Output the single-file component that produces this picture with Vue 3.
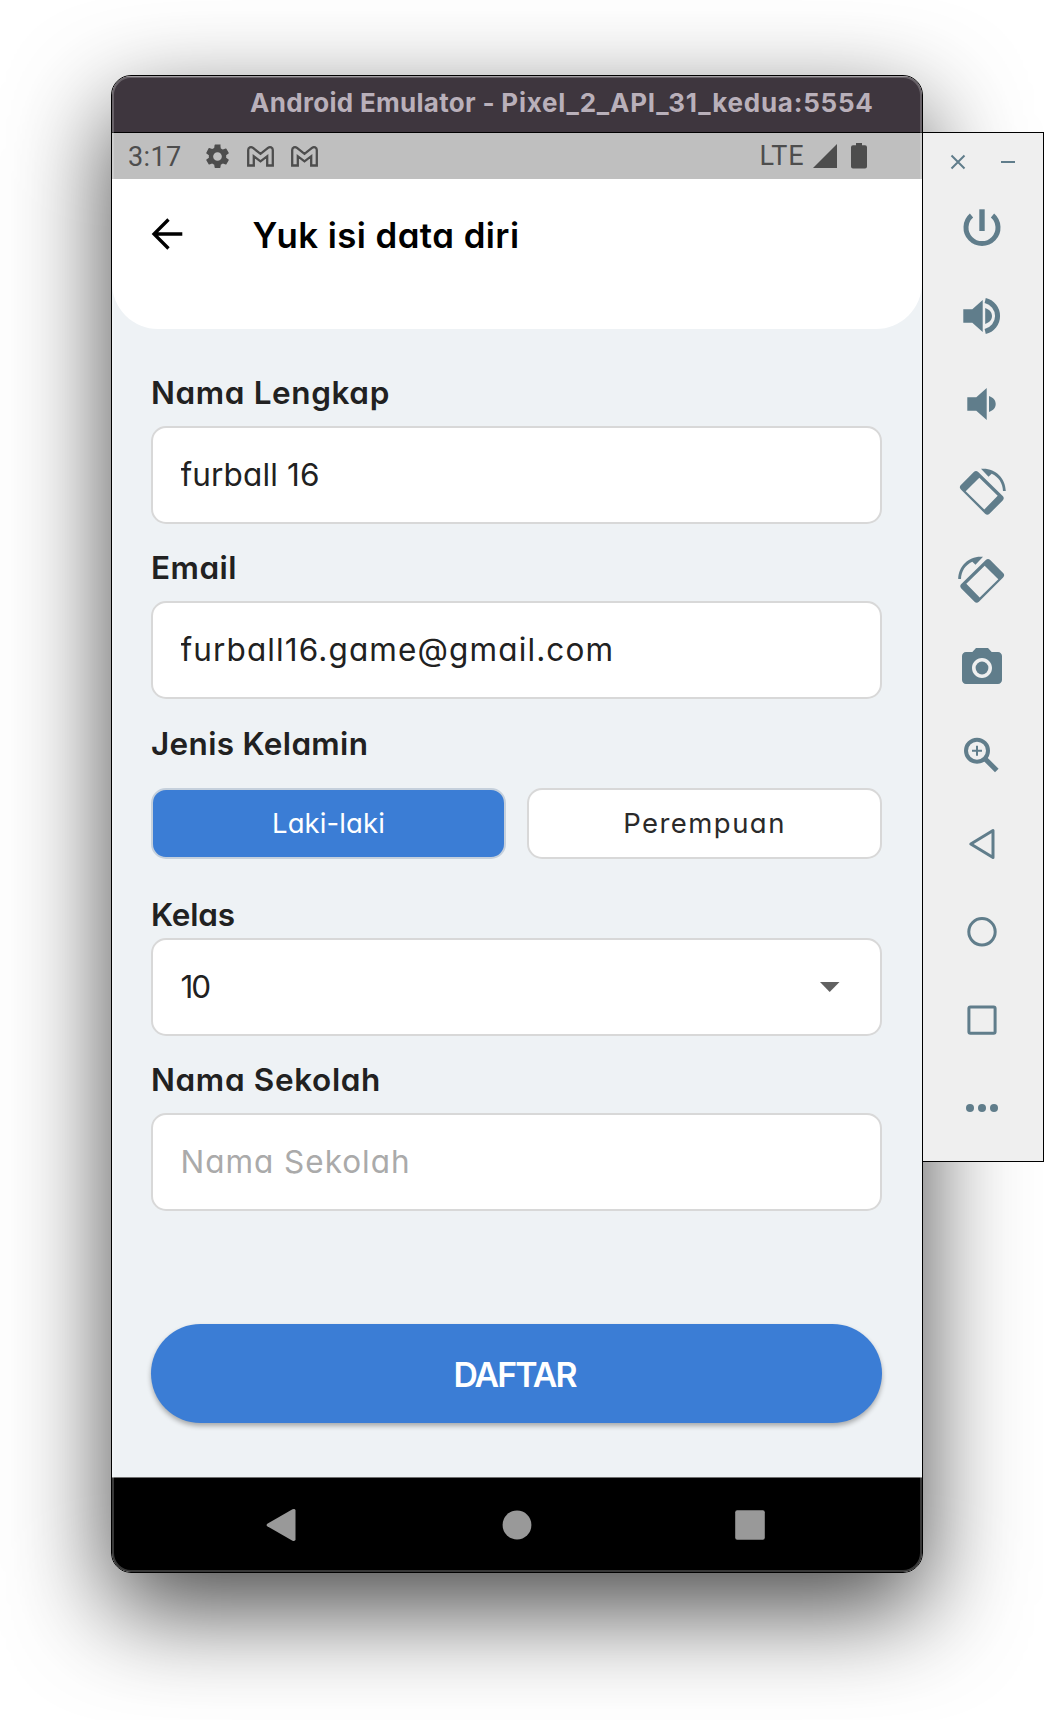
<script setup>
import { ref } from 'vue'

const fullName = ref('furball 16')
const email = ref('furball16.game@gmail.com')
const school = ref('')
const gender = ref('Laki-laki')
const rotatePhone = 'M15.8 4Q18 1.8 20.2 4L44.7 28.1Q46.8 30.3 44.7 32.5L31.5 45.7Q29.3 47.9 27.1 45.7L2.9 21.5Q.7 19.3 2.9 17.1ZM21.3 9.7L7.7 23.2 26.3 41.4 39.7 27.8Z'
const rotateArc = 'M23 .8L30.5 8.7 33.7 5.7C40.5 8.8 44.8 15 45 23H47.8C47.5 10.5 38 .8 25.5 .8Z'
</script>

<template>
  <main class="desktop">
    <section class="emulator">
      <header class="titlebar">Android Emulator - <span class="device">Pixel_2_API_31_kedua:5554</span></header>
      <div class="status">
        <span class="time">3:17</span>
        <svg class="gear" viewBox="0 0 24 24"><path d="M19.14 12.94c.04-.3.06-.61.06-.94s-.02-.64-.07-.94l2.03-1.58a.49.49 0 0 0 .12-.61l-1.92-3.32a.49.49 0 0 0-.59-.22l-2.39.96a7 7 0 0 0-1.62-.94l-.36-2.54A.48.48 0 0 0 13.92 2h-3.84a.48.48 0 0 0-.47.41l-.36 2.54a7.4 7.4 0 0 0-1.62.94l-2.39-.96a.48.48 0 0 0-.59.22L2.74 8.87a.48.48 0 0 0 .12.61l2.03 1.58a6 6 0 0 0 0 1.88l-2.03 1.58a.49.49 0 0 0-.12.61l1.92 3.32c.12.22.37.29.59.22l2.39-.96c.5.38 1.03.7 1.62.94l.36 2.54c.05.24.24.41.48.41h3.84c.24 0 .44-.17.47-.41l.36-2.54a7 7 0 0 0 1.62-.94l2.39.96c.22.08.47 0 .59-.22l1.92-3.32a.48.48 0 0 0-.12-.61ZM12 15.6a3.6 3.6 0 1 1 0-7.2 3.6 3.6 0 0 1 0 7.2Z" /></svg>
        <svg v-for="n in 2" :key="n" class="mail" viewBox="0 0 27 21"><path d="M1.2 19.5V4C1.2 1.4 4 .3 6 1.9L13.5 7.8 21 1.9C23 .3 25.8 1.4 25.8 4V19.5H20.2V10.2L13.5 15.3 6.8 10.2V19.5Z" /></svg>
        <span class="lte">LTE</span>
        <svg class="signal" viewBox="0 0 24 24"><path d="M0 24L24 0V24Z" /></svg>
        <svg class="battery" viewBox="0 0 16 26"><path d="M5 0h6v2.3h3q2 0 2 2V23.5q0 2-2 2H2q-2 0-2-2V4.300q0-2 2-2h3Z" /></svg>
      </div>
      <div class="screen">
        <div class="appbar">
          <svg class="back" viewBox="0 0 32 32"><path d="M31.300 16H3M17.500 1.500L3 16 17.500 30.500" /></svg>
          <h1>Yuk isi data diri</h1>
        </div>
        <form class="form" @submit.prevent>
          <label class="l1">Nama Lengkap</label>
          <input v-model="fullName" class="box v1">
          <label class="l2">Email</label>
          <input v-model="email" class="box v2">
          <label class="l3">Jenis Kelamin</label>
          <div class="choices">
            <button type="button" class="c1" :class="{ on: gender === 'Laki-laki' }" @click="gender = 'Laki-laki'">Laki-laki</button>
            <button type="button" class="c2" :class="{ on: gender === 'Perempuan' }" @click="gender = 'Perempuan'">Perempuan</button>
          </div>
          <label class="l4">Kelas</label>
          <div class="box select"><span>10</span><svg viewBox="0 0 20 10"><path d="M0 0H19.500L9.700 10Z" /></svg></div>
          <label class="l5">Nama Sekolah</label>
          <input v-model="school" class="box v3" placeholder="Nama Sekolah">
          <button class="submit">DAFTAR</button>
        </form>
      </div>
      <nav class="navbar">
        <svg viewBox="0 0 32 32"><path d="M3.300 14.700L28.500 .2Q31.500-.5 31.500 1.500V30.500Q31.500 32.500 28.500 31.800L3.300 17.300Q1.800 16 3.300 14.700Z" /></svg>
        <svg viewBox="0 0 32 32"><circle cx="16" cy="16" r="14.400" /></svg>
        <svg viewBox="0 0 32 32"><rect x="1.200" y="1.200" width="29.600" height="29.600" rx="2" /></svg>
      </nav>
    </section>

    <aside class="toolbar">
      <div class="window-actions">
        <svg viewBox="0 0 14 14"><path d="M.5 .5L13.500 13.500M13.500 .5L.5 13.500" /></svg>
        <svg viewBox="0 0 14 14"><path d="M0 7H14" /></svg>
      </div>
      <div class="tools">
        <svg viewBox="0 0 48 48"><path class="line w5" d="M13.500 11.500A16 16 0 1 0 34.500 11.500" /><path d="M21.300 5.300H26.700V27H21.300Z" /></svg>
        <svg viewBox="0 0 48 48"><path d="M5.300 17.300H14.300L24.700 8V40L14.300 30.700H5.300ZM27.200 16C31.700 17.500 34 20.500 34 24S31.700 30.500 27.200 32Z" /><path class="line w5" d="M27.200 8.500A15.900 15.900 0 0 1 27.200 39.500" /></svg>
        <svg viewBox="0 0 48 48"><path d="M9.300 17.300H18.300L28.700 8V40L18.300 30.700H9.300ZM31 16C35.500 17.500 37.700 20.500 37.700 24S35.500 30.500 31 32Z" /></svg>
        <svg viewBox="0 0 48 48"><path fill-rule="evenodd" :d="rotatePhone" /><path :d="rotateArc" /></svg>
        <svg viewBox="0 0 48 48"><g transform="translate(48 0) scale(-1 1)"><path fill-rule="evenodd" :d="rotatePhone" /><path :d="rotateArc" /></g></svg>
        <svg viewBox="0 0 24 24"><path d="M9 2L7.170 4H4c-1.100 0-2 .9-2 2v12c0 1.100.9 2 2 2h16c1.100 0 2-.9 2-2V6c0-1.100-.9-2-2-2h-3.170L15 2H9zm3 15c-2.760 0-5-2.240-5-5s2.240-5 5-5 5 2.240 5 5-2.240 5-5 5z" /><circle cx="12" cy="12" r="3.200" /></svg>
        <svg viewBox="0 0 48 48"><circle class="line w4" cx="19" cy="18.700" r="11" /><path class="line w5" d="M27.500 27.200L38.800 38.500" /><path class="line w2" d="M14 18.700H24M19 13.700V23.700" /></svg>
        <svg viewBox="0 0 48 48"><path class="line w3" d="M12.800 24L35 10.500V37.500Z" /></svg>
        <svg viewBox="0 0 48 48"><circle class="line w3" cx="24" cy="23.800" r="13.200" /></svg>
        <svg viewBox="0 0 48 48"><rect class="line w3" x="10.900" y="11" width="26.200" height="26.200" rx="1.500" /></svg>
        <svg viewBox="0 0 48 48"><circle cx="12" cy="24" r="4" /><circle cx="24" cy="24" r="4" /><circle cx="36" cy="24" r="4" /></svg>
      </div>
    </aside>
  </main>
</template>

<style>
body { margin: 0; background: #fff; }
</style>

<style scoped>
* { box-sizing: border-box; }
svg { display: block; flex: none; overflow: visible; }
.desktop {
  width: 1044px; height: 1720px; padding: 75px 0 0 111px; overflow: hidden;
  display: flex; align-items: flex-start; background: #fff;
  font-family: Inter, "Open Sans", sans-serif; font-feature-settings: "cv11"; color: #212121;
}
.emulator {
  position: relative; flex: none; width: 812px; height: 1498px; overflow: hidden;
  display: flex; flex-direction: column;
  border: 1px solid #000; border-radius: 20px;
  box-shadow: 0 36px 100px rgba(0, 0, 0, .72);
}
/* translucent window rim */
.emulator::after {
  content: ""; position: absolute; inset: 0; border-radius: 19px;
  box-shadow: inset 0 0 0 2px rgba(255, 255, 255, .22); pointer-events: none;
}
.titlebar {
  height: 57px; padding-left: 138px; border-bottom: 1px solid #000; white-space: nowrap;
  background: #3e363e; color: #b9b0ba; font-size: 26px; font-weight: 700; line-height: 53px; letter-spacing: .3px;
  box-shadow: inset 0 1px #8a848a; font-feature-settings: normal;
}
.device { letter-spacing: .76px; }
.status { height: 46px; display: flex; align-items: center; background: #bfbfbf; color: #4d4d4d; font-family: Roboto, sans-serif; font-size: 27px; }
.status svg { fill: currentColor; }
.time { width: 55px; margin: 1px 0 0 16px; letter-spacing: .4px; }
.gear { width: 29px; height: 29px; margin-left: 19.500px; }
.status .mail { width: 27px; height: 21px; margin-left: 15.500px; fill: none; stroke: currentColor; stroke-width: 2.300; }
.status .mail + .mail { margin-left: 16.800px; }
.lte { margin-left: auto; letter-spacing: .9px; }
.signal { width: 24px; height: 24px; margin-left: 8.500px; }
.battery { width: 16px; height: 26px; margin: 0 55px 0 14px; }
.screen { height: 1298px; background: #eef2f5; }
.appbar { height: 150px; padding: 39px 0 0 39px; display: flex; align-items: flex-start; background: #fff; border-radius: 0 0 46px 46px; color: #000; }
.back { width: 32px; height: 32px; fill: none; stroke: #000; stroke-width: 3.300; }
h1 { margin: -7px 0 0 69.500px; font-size: 34.800px; line-height: 48px; font-weight: 600; letter-spacing: .45px; white-space: nowrap; }
.form { display: flex; flex-direction: column; padding: 43px 40px 0 39px; }
label { height: 40px; line-height: 42px; font-size: 31.500px; font-weight: 600; white-space: nowrap; }
.box {
  flex: none; width: 731px; height: 98px; margin: 14px 0 0; padding: 0 27.500px 1px; outline: 0;
  border: 2px solid #d8d8d8; border-radius: 15px; background: #fff;
  font: 400 31.500px Inter, sans-serif; font-feature-settings: "cv11"; color: #212121;
}
.box::placeholder { color: #aaa; opacity: 1; }
.l1 { letter-spacing: .62px; }
.l2 { letter-spacing: .5px; }
.l3 { letter-spacing: .33px; }
.l4 { letter-spacing: -.2px; }
.l5 { letter-spacing: .65px; }
.v1 { letter-spacing: .15px; }
.v2 { letter-spacing: 1.120px; }
.v3 { letter-spacing: .97px; }
.l2, .l5 { margin-top: 23px; }
.l3 { margin-top: 24px; }
.choices { display: flex; gap: 21px; height: 71px; margin-top: 25px; }
.choices button { flex: 1; padding: 0 0 2px; border: 2px solid #d8d8d8; border-radius: 15px; background: #fff; font: 400 27.500px Inter, sans-serif; font-feature-settings: "cv11"; color: #2a2a2a; }
.choices .c1 { letter-spacing: .1px; }
.choices .c2 { letter-spacing: 1.450px; }
.choices .on { background: #3b7dd5; border-color: #c5d0dc; color: #fff; }
.l4 { margin-top: 35px; }
.select { margin-top: 4px; display: flex; align-items: center; justify-content: space-between; }
.select span { letter-spacing: -2px; }
.select svg { width: 20px; height: 10px; margin: 1px 12.500px 0 0; fill: #616161; }
.submit { height: 99px; margin: 113px 0 0; padding: 2px 4px 0 0; border: 0; border-radius: 50px; background: #3b7dd5; box-shadow: 0 3px 5px rgba(0, 0, 0, .3); color: #fff; font: 600 33.800px Inter, sans-serif; letter-spacing: -1.900px; }
.navbar { height: 95px; padding: 0 156px 0 152px; display: flex; align-items: center; justify-content: space-between; background: #000; border-top: 1px solid #707070; }
.navbar svg { width: 32px; height: 32px; fill: #999; }
.navbar svg:nth-child(2) { margin-left: 3px; }

.toolbar { flex: none; width: 122px; height: 1030px; margin: 57px 0 0 -1px; position: relative; background: #efefef; border: 1px solid #000; }
.window-actions { display: flex; gap: 36px; padding: 22px 0 0 28px; }
.window-actions svg { width: 14px; height: 14px; fill: none; stroke: #607d8b; stroke-width: 2; }
.tools { display: flex; flex-direction: column; gap: 40px; margin: 35px 0 0 35px; }
.tools svg { width: 48px; height: 48px; fill: #607d8b; }
.tools .line { fill: none; stroke: #607d8b; stroke-linejoin: round; }
.tools .w2 { stroke-width: 2; }
.tools .w3 { stroke-width: 3; }
.tools .w4 { stroke-width: 4; }
.tools .w5 { stroke-width: 5; }
</style>
